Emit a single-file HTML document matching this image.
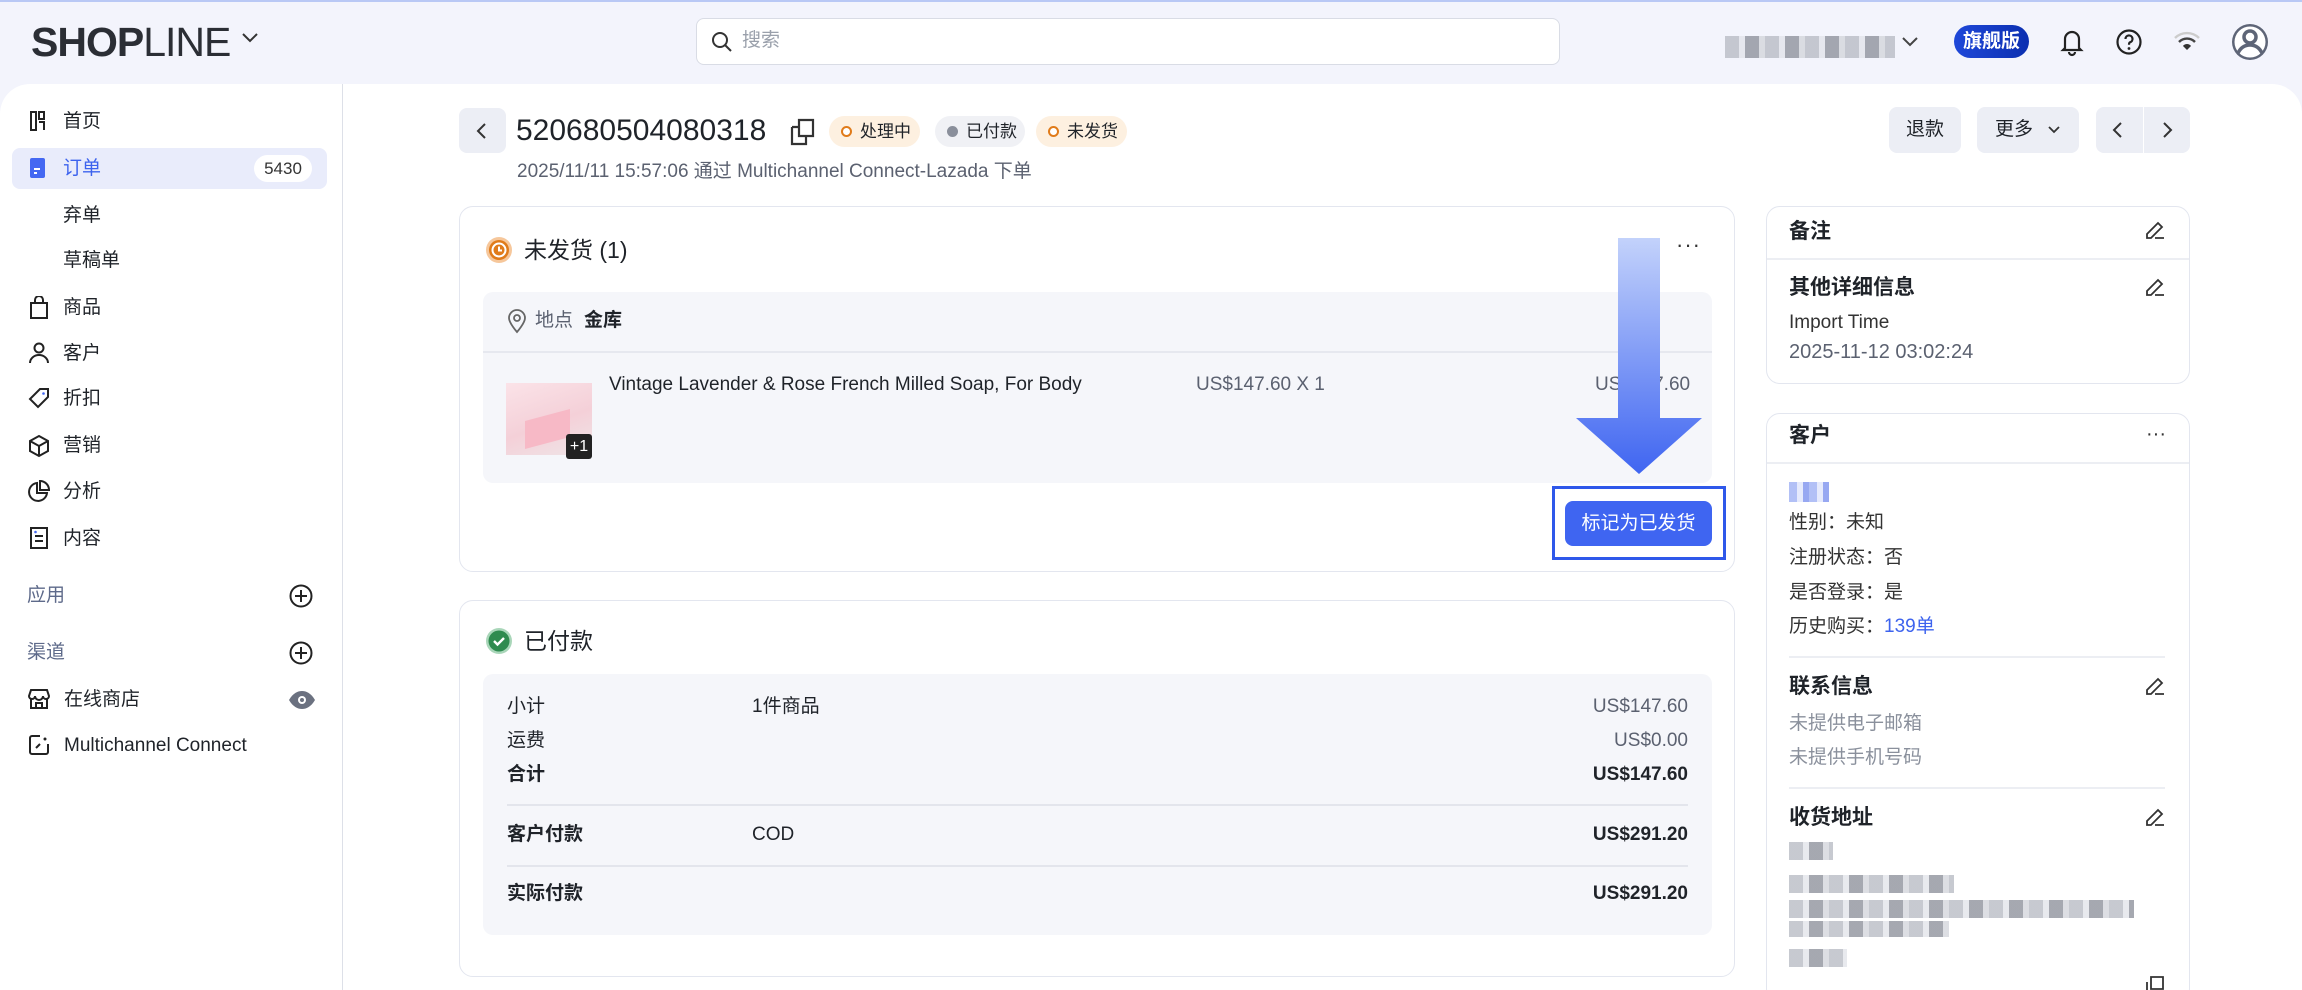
<!DOCTYPE html>
<html><head><meta charset="utf-8">
<style>
*{margin:0;padding:0;box-sizing:border-box}
html{width:2302px;height:990px;overflow:hidden}
body{width:2302px;height:990px;overflow:hidden;background:#f3f4fc;font-family:"Liberation Sans","Noto Sans CJK SC",sans-serif;color:#1f2329;position:relative}
.a{position:absolute;white-space:nowrap}
.t{line-height:28px;font-size:19px}
.g{color:#5b6170}
.card{position:absolute;background:#fff;border:1.5px solid #e3e6ef;border-radius:14px}
.gray{position:absolute;background:#f5f6fa;border-radius:10px}
.btn{position:absolute;background:#eceef5;border-radius:8px;font-size:19px;line-height:46px;text-align:center;color:#1f2329}
.tag{position:absolute;height:31px;border-radius:16px;font-size:17px;line-height:31px;padding-left:31px}
.tag i{position:absolute;left:12px;top:10px;width:11px;height:11px;border-radius:50%}
.blur{position:absolute;background:repeating-linear-gradient(90deg,#b9bcc5 0 14px,#e2e4ea 14px 20px,#8f939d 20px 34px,#d4d6dc 34px 40px);opacity:.8}
.hd{font-size:21px;font-weight:bold;line-height:30px}
</style></head><body>
<div class="a" style="left:0;top:0;width:2302px;height:2px;background:#b9c8f5"></div>
<div class="a" style="left:31px;top:20px;font-size:41px;font-weight:bold;letter-spacing:-1px;color:#2b2e35;line-height:44px">SHOP<span style="font-weight:normal">LINE</span></div>
<svg class="a" style="left:240px;top:30px" width="20" height="16" viewBox="0 0 20 16"><path d="M3 4l7 7 7-7" fill="none" stroke="#333" stroke-width="2"/></svg>
<div class="a" style="left:696px;top:18px;width:864px;height:47px;background:#fff;border:1.5px solid #d9dce5;border-radius:8px"></div>
<svg class="a" style="left:710px;top:30px" width="24" height="24" viewBox="0 0 24 24"><circle cx="10" cy="10" r="7" fill="none" stroke="#333" stroke-width="2"/><path d="M15 15l6 6" stroke="#333" stroke-width="2"/></svg>
<div class="a t" style="left:742px;top:27px;color:#9aa0ab">搜索</div>
<div class="blur" style="left:1725px;top:36px;width:170px;height:22px"></div>
<svg class="a" style="left:1900px;top:34px" width="20" height="16" viewBox="0 0 20 16"><path d="M3 4l7 7 7-7" fill="none" stroke="#444" stroke-width="2"/></svg>
<div class="a" style="left:1954px;top:25px;width:75px;height:33px;border-radius:17px;background:linear-gradient(90deg,#1f48d9,#0b2fb0);color:#fff;font-size:19px;line-height:33px;text-align:center;font-weight:bold">旗舰版</div>
<svg class="a" style="left:2058px;top:27px" width="28" height="30" viewBox="0 0 28 30"><path d="M7 21V12a7 7 0 0 1 14 0v9l2 2H5z M11 25a3 3 0 0 0 6 0" fill="none" stroke="#222" stroke-width="2.2"/></svg>
<svg class="a" style="left:2115px;top:28px" width="28" height="28" viewBox="0 0 28 28"><circle cx="14" cy="14" r="11.5" fill="none" stroke="#222" stroke-width="2.2"/><path d="M10.5 11a3.5 3.5 0 1 1 4.5 3.3c-1 .4-1 1.2-1 2.5" fill="none" stroke="#222" stroke-width="2.2"/><circle cx="14" cy="20.5" r="1.4" fill="#222"/></svg>
<svg class="a" style="left:2172px;top:30px" width="30" height="24" viewBox="0 0 30 24"><path d="M3 8a17 17 0 0 1 24 0" fill="none" stroke="#ccc" stroke-width="2.4"/><path d="M7 12a11 11 0 0 1 16 0" fill="none" stroke="#444" stroke-width="2.4"/><path d="M11 16a5 5 0 0 1 8 0l-4 4z" fill="#333"/></svg>
<svg class="a" style="left:2230px;top:21px" width="40" height="42" viewBox="0 0 40 42"><circle cx="20" cy="21" r="18" fill="#5e6577"/><circle cx="20" cy="21" r="15.5" fill="#fff"/><circle cx="20" cy="16" r="6" fill="none" stroke="#5e6577" stroke-width="3.5"/><path d="M8 32c3-6 7-8 12-8s9 2 12 8" fill="none" stroke="#5e6577" stroke-width="3.5"/></svg>

<div class="a" style="left:0;top:84px;width:2302px;height:906px;background:#fff;border-top-left-radius:30px;border-top-right-radius:30px"></div>
<div class="a" style="left:342px;top:84px;width:1px;height:906px;background:#dde0e8"></div>

<div class="a" style="left:12px;top:148px;width:315px;height:41px;background:#e9ecfb;border-radius:8px"></div>
<div class="a" style="left:254px;top:155px;width:58px;height:27px;background:#fff;border-radius:14px;font-size:17px;line-height:27px;text-align:center;color:#333">5430</div>
<svg class="a" style="left:29px;top:110px" width="18" height="22" viewBox="0 0 18 22"><path d="M2 2h5v18H2zM10 2h5v7h-5zM10 12h5v8" fill="none" stroke="#222" stroke-width="2"/></svg>
<div class="a t" style="left:63px;top:108px">首页</div>
<svg class="a" style="left:29px;top:157px" width="18" height="22" viewBox="0 0 18 22"><rect x="1" y="1" width="15" height="20" rx="2" fill="#4468f2"/><path d="M5 12h6M5 16h3" stroke="#fff" stroke-width="2"/></svg>
<div class="a t" style="left:63px;top:155px;color:#3d63ee">订单</div>
<div class="a t" style="left:63px;top:202px">弃单</div>
<div class="a t" style="left:63px;top:247px">草稿单</div>
<svg class="a" style="left:29px;top:296px" width="20" height="24" viewBox="0 0 20 24"><path d="M2 7h16v15H2z M6 7V4a4 4 0 0 1 8 0v3" fill="none" stroke="#222" stroke-width="2"/></svg>
<div class="a t" style="left:63px;top:294px">商品</div>
<svg class="a" style="left:29px;top:342px" width="20" height="22" viewBox="0 0 20 22"><circle cx="10" cy="6" r="4.5" fill="none" stroke="#222" stroke-width="2"/><path d="M1 21a9 8 0 0 1 18 0" fill="none" stroke="#222" stroke-width="2"/></svg>
<div class="a t" style="left:63px;top:340px">客户</div>
<svg class="a" style="left:28px;top:387px" width="22" height="22" viewBox="0 0 22 22"><path d="M12 2h8v8L10 20 2 12z" fill="none" stroke="#222" stroke-width="2"/><circle cx="15.5" cy="6.5" r="1.3" fill="#4468f2"/></svg>
<div class="a t" style="left:63px;top:385px">折扣</div>
<svg class="a" style="left:28px;top:434px" width="22" height="24" viewBox="0 0 22 24"><path d="M11 2l9 5v10l-9 5-9-5V7zM2 7l9 5 9-5M11 12v10" fill="none" stroke="#222" stroke-width="2"/></svg>
<div class="a t" style="left:63px;top:432px">营销</div>
<svg class="a" style="left:28px;top:480px" width="22" height="22" viewBox="0 0 22 22"><path d="M9 3a9 9 0 1 0 10 10H9z M12 1v9h9a9 9 0 0 0-9-9z" fill="none" stroke="#222" stroke-width="2"/></svg>
<div class="a t" style="left:63px;top:478px">分析</div>
<svg class="a" style="left:29px;top:526px" width="20" height="24" viewBox="0 0 20 24"><path d="M2 2h16v20H2zM6 10h8M6 15h8" fill="none" stroke="#222" stroke-width="2"/><circle cx="6.5" cy="6" r="1.3" fill="#4468f2"/></svg>
<div class="a t" style="left:63px;top:525px">内容</div>
<div class="a t" style="left:27px;top:582px;color:#5e6a8a">应用</div>
<svg class="a" style="left:288px;top:583px" width="26" height="26" viewBox="0 0 26 26"><circle cx="13" cy="13" r="10.5" fill="none" stroke="#222" stroke-width="2"/><path d="M13 7v12M7 13h12" stroke="#222" stroke-width="2"/></svg>
<div class="a t" style="left:27px;top:639px;color:#5e6a8a">渠道</div>
<svg class="a" style="left:288px;top:640px" width="26" height="26" viewBox="0 0 26 26"><circle cx="13" cy="13" r="10.5" fill="none" stroke="#222" stroke-width="2"/><path d="M13 7v12M7 13h12" stroke="#222" stroke-width="2"/></svg>
<svg class="a" style="left:28px;top:688px" width="22" height="22" viewBox="0 0 22 22"><path d="M3 2h16l2 6a3 3 0 0 1-6 0 3 3 0 0 1-8 0 3 3 0 0 1-6 0zM3 10v10h16V10M8 20v-5h6v5" fill="none" stroke="#222" stroke-width="2"/></svg>
<div class="a t" style="left:64px;top:686px">在线商店</div>
<svg class="a" style="left:288px;top:690px" width="28" height="20" viewBox="0 0 28 20"><path d="M1 10C5 3 10 1 14 1s9 2 13 9c-4 7-9 9-13 9S5 17 1 10z" fill="#6b7180"/><circle cx="14" cy="10" r="4" fill="#fff"/><circle cx="14" cy="10" r="2" fill="#6b7180"/></svg>
<svg class="a" style="left:28px;top:734px" width="22" height="22" viewBox="0 0 22 22"><path d="M12 2H4a2 2 0 0 0-2 2v14a2 2 0 0 0 2 2h14a2 2 0 0 0 2-2v-8" fill="none" stroke="#222" stroke-width="2"/><path d="M8 14l4-4" stroke="#222" stroke-width="2"/><circle cx="17" cy="5" r="1.5" fill="#222"/></svg>
<div class="a t" style="left:64px;top:732px">Multichannel Connect</div>

<div class="btn" style="left:459px;top:108px;width:47px;height:45px"></div>
<svg class="a" style="left:474px;top:121px" width="16" height="20" viewBox="0 0 16 20"><path d="M11 3L4 10l7 7" fill="none" stroke="#333" stroke-width="2"/></svg>
<div class="a" style="left:516px;top:112px;font-size:30px;line-height:38px;color:#1f2329">520680504080318</div>
<svg class="a" style="left:790px;top:118px" width="26" height="28" viewBox="0 0 26 28"><path d="M9 2h14v16H9zM2 9h7M2 9v17h14v-8" fill="none" stroke="#333" stroke-width="2.2"/></svg>
<div class="tag" style="left:829px;top:116px;width:91px;background:#fdf0e0"><i style="border:2.5px solid #e07b1a;background:#fff"></i>处理中</div>
<div class="tag" style="left:935px;top:116px;width:90px;background:#f0f1f5"><i style="background:#8a8f9b"></i>已付款</div>
<div class="tag" style="left:1036px;top:116px;width:91px;background:#fdf0e0"><i style="border:2.5px solid #e07b1a;background:#fff"></i>未发货</div>
<div class="a t g" style="left:517px;top:158px">2025/11/11 15:57:06 通过 Multichannel Connect-Lazada 下单</div>
<div class="btn" style="left:1889px;top:107px;width:72px;height:46px">退款</div>
<div class="btn" style="left:1977px;top:107px;width:102px;height:46px;text-align:left;padding-left:18px">更多<svg style="position:absolute;left:70px;top:18px" width="14" height="10" viewBox="0 0 14 10"><path d="M2 2l5 5 5-5" fill="none" stroke="#333" stroke-width="1.8"/></svg></div>
<div class="btn" style="left:2096px;top:107px;width:94px;height:46px"></div>
<div class="a" style="left:2143px;top:107px;width:1px;height:46px;background:#fff"></div>
<svg class="a" style="left:2110px;top:120px" width="16" height="20" viewBox="0 0 16 20"><path d="M11 3L4 10l7 7" fill="none" stroke="#333" stroke-width="2"/></svg>
<svg class="a" style="left:2159px;top:120px" width="16" height="20" viewBox="0 0 16 20"><path d="M5 3l7 7-7 7" fill="none" stroke="#333" stroke-width="2"/></svg>

<div class="card" style="left:459px;top:206px;width:1276px;height:366px"></div>
<svg class="a" style="left:485px;top:236px" width="28" height="28" viewBox="0 0 28 28"><circle cx="14" cy="14" r="13" fill="#f6c79b"/><circle cx="14" cy="14" r="10" fill="#e07b1a"/><circle cx="14" cy="14" r="6.5" fill="none" stroke="#fff" stroke-width="2"/><path d="M14 10.5v4h3" fill="none" stroke="#fff" stroke-width="2"/></svg>
<div class="a hd" style="left:524px;top:235px;font-weight:normal;font-size:23px">未发货 (1)</div>
<div class="a" style="left:1676px;top:232px;font-size:22px;letter-spacing:1px;color:#333">···</div>
<div class="gray" style="left:483px;top:292px;width:1229px;height:191px"></div>
<div class="a" style="left:483px;top:351px;width:1229px;height:1.5px;background:#e6e8ef"></div>
<svg class="a" style="left:507px;top:308px" width="20" height="26" viewBox="0 0 20 26"><path d="M10 24S2 15 2 10a8 8 0 0 1 16 0c0 5-8 14-8 14z" fill="none" stroke="#666" stroke-width="1.8"/><circle cx="10" cy="10" r="3" fill="none" stroke="#666" stroke-width="1.8"/></svg>
<div class="a t g" style="left:535px;top:307px">地点</div>
<div class="a t" style="left:584px;top:307px;font-weight:bold">金库</div>
<div class="a" style="left:506px;top:383px;width:86px;height:72px;background:linear-gradient(160deg,#fbe3e8,#f4d0d8 55%,#efe5e7);"></div>
<div class="a" style="left:525px;top:415px;width:45px;height:28px;background:#f7b9c6;transform:skewY(-15deg)"></div>
<div class="a" style="left:566px;top:434px;width:26px;height:25px;background:#222;border-radius:3px;color:#fff;font-size:16px;line-height:25px;text-align:center">+1</div>
<div class="a t" style="left:609px;top:371px">Vintage Lavender &amp; Rose French Milled Soap, For Body</div>
<div class="a t g" style="left:1196px;top:371px">US$147.60 X 1</div>
<div class="a t g" style="left:1595px;top:371px">US$147.60</div>
<svg class="a" style="left:1574px;top:238px" width="130" height="238" viewBox="0 0 130 238"><defs><linearGradient id="ag" x1="0" y1="0" x2="0" y2="1"><stop offset="0" stop-color="#c3d2fb"/><stop offset="1" stop-color="#3f65f1"/></linearGradient></defs><path d="M44 0h42v180h42L65 236 2 180h42z" fill="url(#ag)"/></svg>
<div class="a" style="left:1552px;top:486px;width:174px;height:74px;border:3.5px solid #2f58ea"></div>
<div class="a" style="left:1565px;top:501px;width:147px;height:45px;background:#3f65f1;border-radius:8px;color:#fff;font-size:19px;line-height:45px;text-align:center">标记为已发货</div>

<div class="card" style="left:459px;top:600px;width:1276px;height:377px"></div>
<svg class="a" style="left:485px;top:627px" width="28" height="28" viewBox="0 0 28 28"><circle cx="14" cy="14" r="13" fill="#a9d6b9"/><circle cx="14" cy="14" r="10.5" fill="#2e8b4f"/><path d="M9 14l3.5 3.5L19 11" fill="none" stroke="#fff" stroke-width="2.4"/></svg>
<div class="a hd" style="left:524px;top:626px;font-weight:normal;font-size:23px">已付款</div>
<div class="gray" style="left:483px;top:674px;width:1229px;height:261px"></div>
<div class="a t" style="left:507px;top:693px">小计</div><div class="a t" style="left:752px;top:693px">1件商品</div><div class="a t g" style="right:614px;top:693px">US$147.60</div>
<div class="a t" style="left:507px;top:727px">运费</div><div class="a t g" style="right:614px;top:727px">US$0.00</div>
<div class="a t" style="left:507px;top:761px;font-weight:bold">合计</div><div class="a t" style="right:614px;top:761px;font-weight:bold">US$147.60</div>
<div class="a" style="left:507px;top:804px;width:1181px;height:1.5px;background:#e3e5ec"></div>
<div class="a t" style="left:507px;top:821px;font-weight:bold">客户付款</div><div class="a t" style="left:752px;top:821px">COD</div><div class="a t" style="right:614px;top:821px;font-weight:bold">US$291.20</div>
<div class="a" style="left:507px;top:865px;width:1181px;height:1.5px;background:#e3e5ec"></div>
<div class="a t" style="left:507px;top:880px;font-weight:bold">实际付款</div><div class="a t" style="right:614px;top:880px;font-weight:bold">US$291.20</div>

<div class="card" style="left:1766px;top:206px;width:424px;height:178px"></div>
<div class="a hd" style="left:1789px;top:217px">备注</div>
<svg class="a" style="left:2144px;top:219px" width="22" height="22" viewBox="0 0 22 22"><path d="M3 19v-4L14 4l4 4L7 19zM11 19h9" fill="none" stroke="#333" stroke-width="1.8"/></svg>
<div class="a" style="left:1767px;top:258px;width:422px;height:1.5px;background:#eceef3"></div>
<div class="a hd" style="left:1789px;top:273px">其他详细信息</div>
<svg class="a" style="left:2144px;top:276px" width="22" height="22" viewBox="0 0 22 22"><path d="M3 19v-4L14 4l4 4L7 19zM11 19h9" fill="none" stroke="#333" stroke-width="1.8"/></svg>
<div class="a t" style="left:1789px;top:309px;color:#333">Import Time</div>
<div class="a t g" style="left:1789px;top:338px;font-size:20px">2025-11-12 03:02:24</div>

<div class="card" style="left:1766px;top:413px;width:424px;height:590px"></div>
<div class="a hd" style="left:1789px;top:421px">客户</div>
<div class="a" style="left:2146px;top:423px;font-size:20px;color:#333">···</div>
<div class="a" style="left:1767px;top:462px;width:422px;height:1.5px;background:#eceef3"></div>
<div class="a" style="left:1789px;top:482px;width:40px;height:20px;background:repeating-linear-gradient(90deg,#9fb0f4 0 8px,#dfe5fc 8px 14px,#7d92ee 14px 20px);opacity:.8"></div>
<div class="a t" style="left:1789px;top:509px;color:#333">性别：未知</div>
<div class="a t" style="left:1789px;top:544px;color:#333">注册状态：否</div>
<div class="a t" style="left:1789px;top:579px;color:#333">是否登录：是</div>
<div class="a t" style="left:1789px;top:613px;color:#333">历史购买：<span style="color:#3d63ee">139单</span></div>
<div class="a" style="left:1789px;top:656px;width:376px;height:1.5px;background:#eceef3"></div>
<div class="a hd" style="left:1789px;top:672px">联系信息</div>
<svg class="a" style="left:2144px;top:675px" width="22" height="22" viewBox="0 0 22 22"><path d="M3 19v-4L14 4l4 4L7 19zM11 19h9" fill="none" stroke="#333" stroke-width="1.8"/></svg>
<div class="a t" style="left:1789px;top:710px;color:#8a909c">未提供电子邮箱</div>
<div class="a t" style="left:1789px;top:744px;color:#8a909c">未提供手机号码</div>
<div class="a" style="left:1789px;top:787px;width:376px;height:1.5px;background:#eceef3"></div>
<div class="a hd" style="left:1789px;top:803px">收货地址</div>
<svg class="a" style="left:2144px;top:806px" width="22" height="22" viewBox="0 0 22 22"><path d="M3 19v-4L14 4l4 4L7 19zM11 19h9" fill="none" stroke="#333" stroke-width="1.8"/></svg>
<div class="blur" style="left:1789px;top:842px;width:44px;height:18px"></div>
<div class="blur" style="left:1789px;top:875px;width:165px;height:18px"></div>
<div class="blur" style="left:1789px;top:900px;width:345px;height:18px"></div>
<div class="blur" style="left:1789px;top:921px;width:160px;height:16px"></div>
<div class="blur" style="left:1789px;top:949px;width:58px;height:18px"></div>
<svg class="a" style="left:2145px;top:976px" width="20" height="14" viewBox="0 0 20 14"><path d="M6 1h12v12H6zM2 6v8" fill="none" stroke="#333" stroke-width="1.8"/></svg>
</body></html>
